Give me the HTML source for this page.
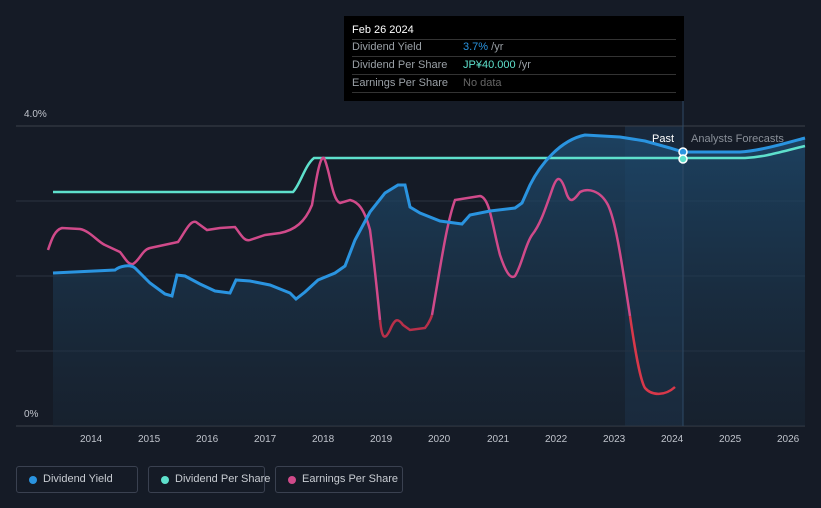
<!DOCTYPE html><html><head><style>
body{margin:0;background:#151b26;font-family:"Liberation Sans",sans-serif;}
.w{position:relative;width:821px;height:508px;overflow:hidden;background:#151b26}
.tt{position:absolute;left:344px;top:16px;width:340px;height:85px;background:#000;color:#9aa0a6;font-size:11px}
.tt div{position:absolute;left:8px;right:8px;height:17px;border-bottom:1px solid #333;line-height:17px}
.lg{position:absolute;top:466px;height:27px;border:1px solid #3a4150;border-radius:3px;color:#c8ccd2;font-size:11px;line-height:25px;box-sizing:border-box;padding-left:26px;white-space:nowrap}
.lg i{position:absolute;left:12px;top:9px;width:8px;height:8px;border-radius:50%}
.ax{position:absolute;color:#c0c4cc;font-size:10px}
</style></head><body><div class="w">
<svg width="821" height="508" style="position:absolute;left:0;top:0">
<defs><linearGradient id="g" x1="0" x2="0" y1="0" y2="1"><stop offset="0" stop-color="#1e4a6e" stop-opacity=".8"/><stop offset="1" stop-color="#1a2a3a" stop-opacity=".4"/></linearGradient></defs>
<rect x="625" y="126" width="58" height="300" fill="#1d3a55" opacity=".5"/>
<g stroke="#2c3340" stroke-width="1"><line x1="16" x2="805" y1="126" y2="126" stroke="#3a404b"/><line x1="16" x2="805" y1="201" y2="201"/><line x1="16" x2="805" y1="276" y2="276"/><line x1="16" x2="805" y1="351" y2="351"/><line x1="16" x2="805" y1="426" y2="426" stroke="#3a404b"/></g>
<path d="M53,273 L115,270 C120,266 130,264 135,268 L150,283 L165,294 L172,296 L177,275 L185,276 L200,284 L215,291 L230,293 L236,280 L250,281 L270,285 L290,293 L296,299 L305,292 L318,280 L335,273 L345,266 L355,240 L370,212 L385,193 L398,185 L405,185 L410,207 L420,213 L440,221 L462,224 L470,215 L490,211 L515,208 L522,203 L530,185 L545,160 L560,145 L575,137 L585,135 L620,137 L645,141 L670,148 L683,152 L740,152 L760,150 L790,142 L805,138 L805,426 L53,426 Z" fill="url(#g)"/>
<line x1="683" y1="100" x2="683" y2="426" stroke="#2e4a66"/>
<path d="M53,192 L293,192 C300,185 305,165 314,158 L745,158 C765,157 780,152 805,146" fill="none" stroke="#5ee0cc" stroke-width="2.5"/>
<path d="M48,250 C52,238 55,230 62,228 L80,229 C90,231 98,242 105,245 L120,252 C125,258 128,265 133,264 C140,260 142,250 150,248 L178,242 C185,232 190,220 196,222 L207,230 L220,228 L235,227 C240,233 244,242 250,240 L265,235 L280,233 C295,230 305,222 312,205 C316,180 320,155 324,158 C330,170 332,200 340,203 L350,200 C358,202 364,208 370,230 C374,260 378,300 380,320" fill="none" stroke="#d04a8a" stroke-width="2.5"/>
<path d="M380,320 C382,340 385,340 390,330 C395,318 398,318 403,325 L410,330 L425,328 C430,322 432,315 432,315" fill="none" stroke="#b8304a" stroke-width="2.5"/>
<path d="M432,315 C440,270 446,225 455,200 L480,196 C490,198 492,225 500,255 C505,270 510,280 515,276 C522,265 525,245 532,235 C540,225 545,210 552,190 C556,178 560,172 566,192 C570,205 574,200 580,192 C588,188 600,190 608,205 C615,220 620,250 630,316" fill="none" stroke="#d04a8a" stroke-width="2.5"/>
<path d="M630,316 C635,350 640,380 645,388 C652,396 665,396 675,387" fill="none" stroke="#d8384a" stroke-width="2.5"/>
<path d="M53,273 L115,270 C120,266 130,264 135,268 L150,283 L165,294 L172,296 L177,275 L185,276 L200,284 L215,291 L230,293 L236,280 L250,281 L270,285 L290,293 L296,299 L305,292 L318,280 L335,273 L345,266 L355,240 L370,212 L385,193 L398,185 L405,185 L410,207 L420,213 L440,221 L462,224 L470,215 L490,211 L515,208 L522,203 L530,185 C540,165 560,140 585,135 L620,137 L645,141 L670,148 L683,152 L740,152 C760,151 790,142 805,138" fill="none" stroke="#2a94e0" stroke-width="3"/>
<circle cx="683" cy="152" r="4" fill="#2a94e0" stroke="#fff" stroke-width="1.5"/>
<circle cx="683" cy="159" r="4" fill="#5ee0cc" stroke="#fff" stroke-width="1.5"/>
</svg>
<div class="ax" style="left:24px;top:109px">4.0%</div>
<div class="ax" style="left:24px;top:409px">0%</div>
<div class="ax" style="left:652px;top:133px;color:#fff;font-size:11px">Past</div>
<div class="ax" style="left:691px;top:133px;color:#8a9099;font-size:11px">Analysts Forecasts</div>
<div class="ax" style="left:80px;top:434px">2014</div><div class="ax" style="left:138px;top:434px">2015</div><div class="ax" style="left:196px;top:434px">2016</div><div class="ax" style="left:254px;top:434px">2017</div><div class="ax" style="left:312px;top:434px">2018</div><div class="ax" style="left:370px;top:434px">2019</div><div class="ax" style="left:428px;top:434px">2020</div><div class="ax" style="left:487px;top:434px">2021</div><div class="ax" style="left:545px;top:434px">2022</div><div class="ax" style="left:603px;top:434px">2023</div><div class="ax" style="left:661px;top:434px">2024</div><div class="ax" style="left:719px;top:434px">2025</div><div class="ax" style="left:777px;top:434px">2026</div>
<div class="tt">
<div style="top:6px;color:#fff;border-bottom-color:#333">Feb 26 2024</div>
<div style="top:23px">Dividend Yield<span style="position:absolute;left:111px"><span style="color:#2a94e0">3.7%</span> /yr</span></div>
<div style="top:41px">Dividend Per Share<span style="position:absolute;left:111px"><span style="color:#5ee0cc">JP¥40.000</span> /yr</span></div>
<div style="top:59px">Earnings Per Share<span style="position:absolute;left:111px;color:#666">No data</span></div>
</div>
<div class="lg" style="left:16px;width:122px"><i style="background:#2a94e0"></i>Dividend Yield</div>
<div class="lg" style="left:148px;width:117px"><i style="background:#5ee0cc"></i>Dividend Per Share</div>
<div class="lg" style="left:275px;width:128px"><i style="background:#d04a8a"></i>Earnings Per Share</div>
</div></body></html>
